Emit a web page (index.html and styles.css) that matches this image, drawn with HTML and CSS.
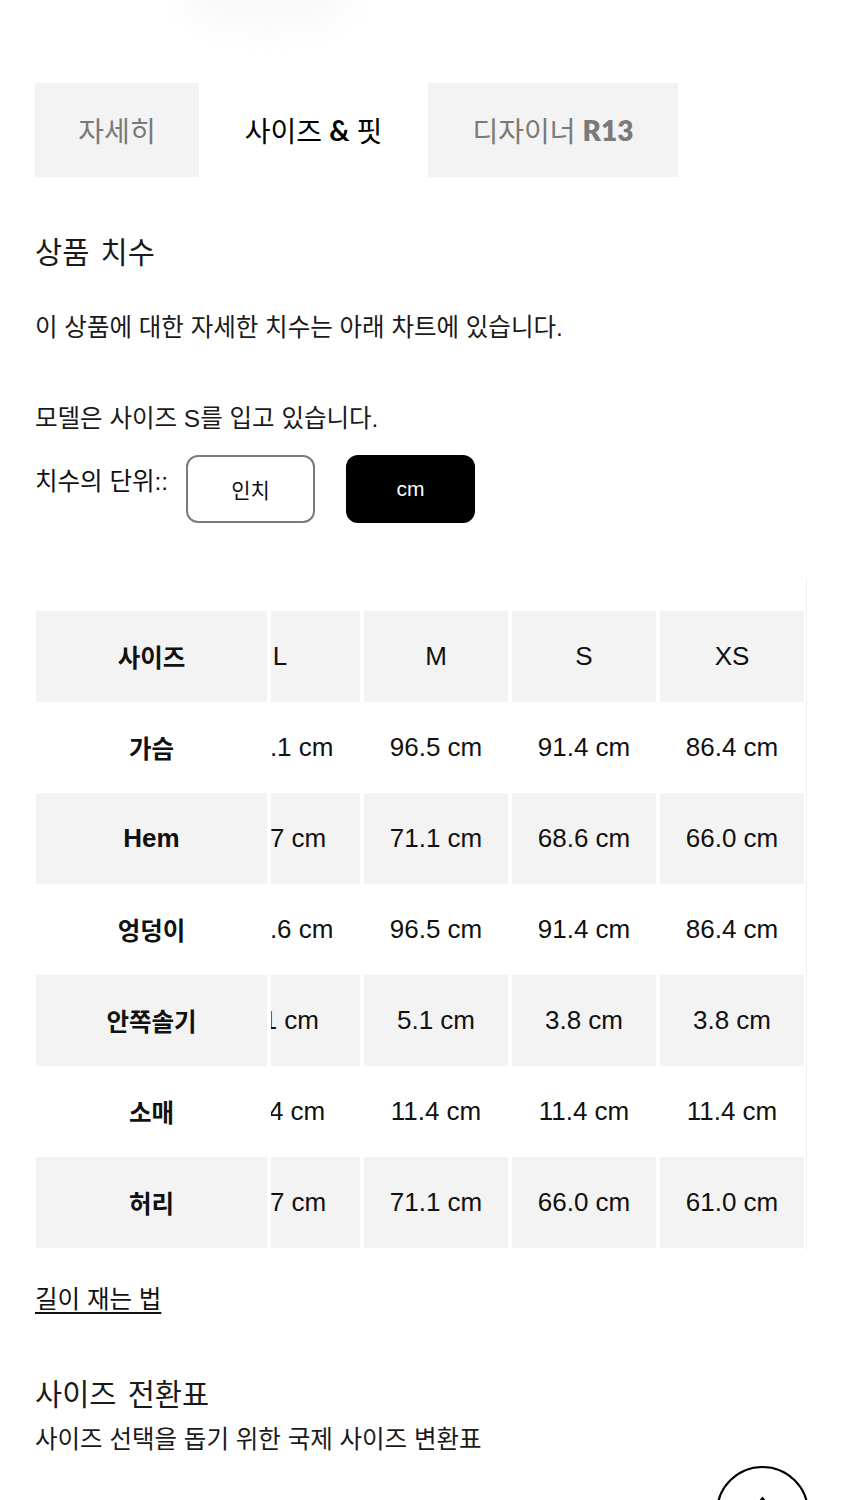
FILE: index.html
```html
<!DOCTYPE html>
<html lang="ko">
<head>
<meta charset="utf-8">
<title>사이즈 &amp; 핏</title>
<link rel="stylesheet" href="styles.css">
</head>
<body>
<div class="page">
  <div class="hero"><div class="hero-shadow"></div></div>

  <div class="tabs">
    <div class="tab tab-a">자세히</div>
    <div class="tab tab-b active">사이즈 <b class="amp">&amp;</b> 핏</div>
    <div class="tab tab-c">디자이너 <b class="brand">R13</b></div>
  </div>

  <h2 class="title first">상품 치수</h2>
  <p class="txt p1">이 상품에 대한 자세한 치수는 아래 차트에 있습니다.</p>
  <p class="txt p2">모델은 사이즈 S를 입고 있습니다.</p>

  <div class="units">
    <span class="units-label">치수의 단위::</span>
    <button class="unit-btn">인치</button>
    <button class="unit-btn on">cm</button>
  </div>

  <div class="table-wrap">
    <table class="sizes">
      <colgroup>
        <col class="c-label"><col class="c-clip"><col class="c-size"><col class="c-size"><col class="c-size">
      </colgroup>
      <tr class="gray">
        <th class="lbl">사이즈</th>
        <td><div class="clip"><span>L</span></div></td>
        <td>M</td><td>S</td><td>XS</td>
      </tr>
      <tr>
        <th class="lbl">가슴</th>
        <td><div class="clip"><span>101.1 cm</span></div></td>
        <td>96.5 cm</td><td>91.4 cm</td><td>86.4 cm</td>
      </tr>
      <tr class="gray">
        <th class="lbl latin">Hem</th>
        <td><div class="clip"><span>73.7 cm</span></div></td>
        <td>71.1 cm</td><td>68.6 cm</td><td>66.0 cm</td>
      </tr>
      <tr>
        <th class="lbl">엉덩이</th>
        <td><div class="clip"><span>101.6 cm</span></div></td>
        <td>96.5 cm</td><td>91.4 cm</td><td>86.4 cm</td>
      </tr>
      <tr class="gray">
        <th class="lbl">안쪽솔기</th>
        <td><div class="clip"><span>5.1 cm</span></div></td>
        <td>5.1 cm</td><td>3.8 cm</td><td>3.8 cm</td>
      </tr>
      <tr>
        <th class="lbl">소매</th>
        <td><div class="clip"><span>11.4 cm</span></div></td>
        <td>11.4 cm</td><td>11.4 cm</td><td>11.4 cm</td>
      </tr>
      <tr class="gray">
        <th class="lbl">허리</th>
        <td><div class="clip"><span>73.7 cm</span></div></td>
        <td>71.1 cm</td><td>66.0 cm</td><td>61.0 cm</td>
      </tr>
    </table>
  </div>

  <p class="txt howto"><a href="#">길이 재는 법</a></p>

  <h2 class="title second">사이즈 전환표</h2>
  <p class="txt p3">사이즈 선택을 돕기 위한 국제 사이즈 변환표</p>
</div>

<a class="to-top" href="#" aria-label="맨 위로">
  <svg width="93" height="93" viewBox="0 0 93 93"><path d="M46.5 34 L46.5 62 M40 41 L46.5 33 L53 41" fill="none" stroke="#000" stroke-width="3" stroke-linejoin="miter"/></svg>
</a>
</body>
</html>
```

FILE: styles.css
```css
html, body {
  margin: 0;
  padding: 0;
  background: #fff;
}
body {
  font-family: "Liberation Sans", "Noto Sans CJK KR", sans-serif;
  color: #111;
}
.page {
  padding: 0 0 0 35px;
  width: 808px;
}
.hero {
  height: 83px;
  position: relative;
  overflow: hidden;
  margin-left: -35px;
}
.hero-shadow {
  margin: -34px 0 0 185px;
  width: 165px;
  height: 64px;
  border-radius: 50%;
  background: #f8f8f8;
  filter: blur(14px);
}
.tabs {
  display: flex;
  height: 94px;
}
.tab {
  display: flex;
  align-items: center;
  justify-content: center;
  background: #f3f3f3;
  font-family: "Lato", "Noto Sans CJK KR", sans-serif;
  font-size: 28px;
  color: #7a7a7a;
}
.tab-a { width: 164px; }
.tab-b { width: 229px; }
.tab-c { width: 250px; }
.tab.active {
  background: #fff;
  color: #000;
}
.tab .amp { font-weight: 700; margin: 0 7px; }
.tab .brand { font-weight: 800; margin-left: 7px; }

.title {
  margin: 0;
  font-family: "Noto Sans CJK KR", sans-serif;
  font-weight: 400;
  font-size: 29.5px;
  line-height: 40px;
  color: #1a1a1a;
  word-spacing: 3px;
}
.title.first { margin-top: 53px; }
.title.second { margin-top: 55px; }

.txt {
  margin: 0;
  font-size: 24.5px;
  line-height: 34px;
  color: #1a1a1a;
}
.p1 { margin-top: 41px; }
.p2 { margin-top: 57px; }
.p3 { margin-top: 11px; }

.units {
  display: flex;
  align-items: flex-start;
  margin-top: 19px;
  height: 68px;
}
.units-label {
  flex: none;
  width: 151px;
  font-size: 24.5px;
  line-height: 34px;
  margin-top: 10px;
}
.unit-btn {
  width: 129px;
  height: 68px;
  border-radius: 12px;
  border: 2px solid #7a7a7a;
  background: #fff;
  color: #111;
  font-family: "Liberation Sans", "Noto Sans CJK KR", sans-serif;
  font-size: 21px;
  padding: 0;
  margin-right: 31px;
}
.unit-btn.on {
  background: #000;
  border-color: #000;
  color: #fff;
}

.table-wrap {
  margin-top: 55px;
  margin-left: 1px;
  width: 770px;
  padding-top: 33px;
  padding-bottom: 2px;
  border-right: 1px solid #f0f0f0;
}
.sizes {
  border-collapse: separate;
  border-spacing: 4px 0;
  margin-left: -4px;
  table-layout: fixed;
  width: 776px;
}
.c-label { width: 231px; }
.c-clip { width: 89px; }
.c-size { width: 144px; }
.sizes th, .sizes td {
  height: 91px;
  padding: 0;
  text-align: center;
  vertical-align: middle;
  font-size: 26px;
  font-weight: 400;
  color: #111;
}
.sizes tr.gray th, .sizes tr.gray td {
  background: #f3f3f3;
}
.sizes .lbl {
  font-family: "Noto Sans CJK KR", sans-serif;
  font-weight: 700;
  font-size: 24.5px;
}
.sizes .lbl.latin {
  font-family: "Liberation Sans", sans-serif;
  font-size: 26px;
}
.clip {
  width: 89px;
  overflow: hidden;
  display: flex;
  justify-content: flex-end;
}
.clip span {
  flex: none;
  width: 144px;
  margin-right: 8px;
  text-align: center;
}

.howto { margin-top: 33px; }
.howto a {
  color: #111;
  text-decoration: underline;
  text-underline-offset: 4px;
  text-decoration-thickness: 2px;
}

.to-top {
  position: fixed;
  left: 716px;
  top: 1466px;
  width: 93px;
  height: 93px;
  box-sizing: border-box;
  border: 2.5px solid #000;
  border-radius: 50%;
  background: #fff;
  display: block;
}
.to-top svg {
  display: block;
  margin: -2.5px 0 0 -2.5px;
}
```
